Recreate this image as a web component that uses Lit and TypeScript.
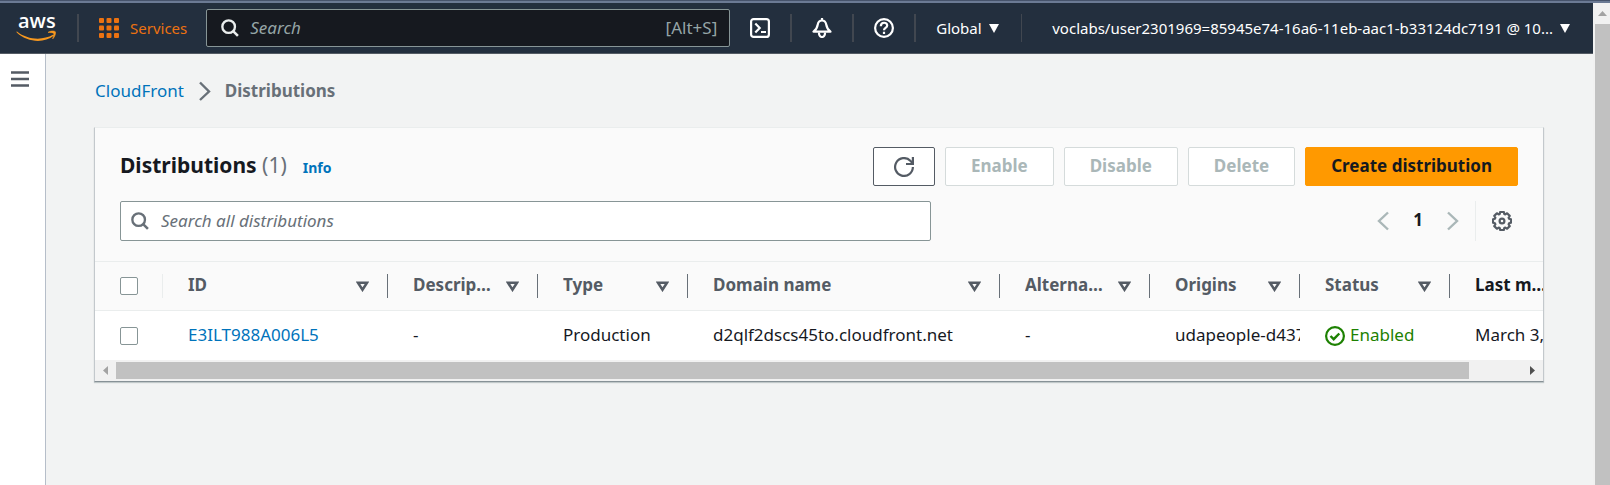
import { LitElement, html, css, svg } from "lit";
import { customElement, state } from "lit/decorators.js";
import { classMap } from "lit/directives/class-map.js";

interface Column {
  label: string;
  sortable: boolean;
  kind: string;
}

const columns: Column[] = [
  { label: "ID", sortable: true, kind: "id" },
  { label: "Description", sortable: true, kind: "std" },
  { label: "Type", sortable: true, kind: "std" },
  { label: "Domain name", sortable: true, kind: "domain" },
  { label: "Alternate domains", sortable: true, kind: "std" },
  { label: "Origins", sortable: true, kind: "std" },
  { label: "Status", sortable: true, kind: "std" },
  { label: "Last modified", sortable: false, kind: "std" },
];

const searchIcon = svg`<svg class="icon" viewBox="0 0 20 20" aria-hidden="true">
  <circle cx="8.5" cy="8.5" r="7" fill="none" stroke="currentColor" stroke-width="2.6"/>
  <path d="M13.200 13.200l5.600 5.600" fill="none" stroke="currentColor" stroke-width="2.800"/></svg>`;

const caret = svg`<svg class="caret" viewBox="0 0 10 10" aria-hidden="true"><path d="M0 1h10L5 10z" fill="currentColor"/></svg>`;

@customElement("app-root")
export class AppRoot extends LitElement {
  @state() private selected = false;

  static styles = css`
    :host {
      display: flex;
      flex-direction: column;
      height: 100vh;
      overflow: hidden;
      box-sizing: border-box;
      border-top: 1px solid #46536b;
      background: #f2f3f3;
      color: #16191f;
      font-family: "Noto Sans", "Open Sans", sans-serif;
      font-size: 17px;
      line-height: 24px;
    }
    * { box-sizing: border-box; }
    button, input { font: inherit; color: inherit; margin: 0; }
    button { background: none; border: 0; padding: 0; cursor: pointer; display: flex; align-items: center; justify-content: center; }
    a { color: #0073bb; text-decoration: none; }
    svg { display: block; flex: none; }
    .icon { width: 20px; height: 20px; }
    .caret { width: 10px; height: 10px; }

    .frame { flex: 1; min-height: 0; display: flex; border-top: 2px solid #6b7a94; }
    .window { flex: 1; min-width: 0; display: flex; flex-direction: column; }

    .topbar {
      flex: none; height: 51px; display: flex; align-items: center;
      background: #232f3e; border-bottom: 1px solid #545b64; color: #fff;
      font-size: 15px; padding-right: 23px;
    }
    .logo { width: 42px; height: 32px; margin: 0 19px 0 16px; overflow: visible; }
    .logo text { font-family: "Open Sans", "Noto Sans", sans-serif; font-size: 20px; font-weight: 600; fill: #fff; }
    .rule { flex: none; width: 2px; height: 28px; background: #414750; }
    .rule.thin { width: 1px; }
    .services { color: #ec7211; gap: 11px; margin: 0 19px 0 20px; }
    .globalsearch {
      flex: 1; height: 38px; display: flex; align-items: center; gap: 11px;
      background: #16191f; border: 1px solid #879596; border-radius: 2px;
      padding: 0 12px 0 14px; color: #95a5a6; margin-right: 20px; font-size: 17px;
      max-width: 524px;
    }
    .globalsearch .icon { color: #eaeded; width: 18px; height: 18px; }
    .field { flex: 1; min-width: 0; border: 0; outline: 0; background: none; padding: 0; }
    .field::placeholder { color: inherit; opacity: 1; font-style: italic; }
    .tool { width: 20px; height: 20px; margin-right: 20px; }
    .tool.next { margin-left: 20px; }
    .region { gap: 7px; margin: 0 22px 0 20px; }
    .account { gap: 7px; margin-left: auto; }

    .body { flex: 1; min-height: 0; display: flex; }
    .rail { flex: none; width: 46px; background: #fff; border-right: 1px solid #b6bec9; padding: 17px 0 0 11px; }
    .rail button { width: 18px; height: 16px; color: #545b64; }
    main { flex: 1; min-width: 0; padding: 25px 49px 0 48px; }

    .crumbs { display: flex; align-items: center; gap: 14px; margin-bottom: 24px; padding-left: 1px; }
    .crumbs .icon { color: #687078; width: 13px; }
    .crumbs .here { color: #687078; font-weight: 700; }

    .card { background: #fff; border: 1px solid #eaeded; border-left-color: #c3c8cc; border-right-color: #c3c8cc; border-bottom-color: #879196; box-shadow: 0 1px 1px rgba(0, 28, 36, 0.2); }
    .head { background: #fafafa; padding: 19px 25px 20px; border-bottom: 1px solid #eaeded; }
    .titlebar { display: flex; align-items: center; gap: 10px; margin-bottom: 15px; }
    .title { display: flex; align-items: baseline; margin-right: auto; padding-bottom: 3px; }
    h1 { margin: 0; font-size: 21px; line-height: 28px; font-weight: 700; }
    h1 .count { color: #687078; font-weight: 400; }
    .info { font-size: 14px; font-weight: 700; margin-left: 16px; }
    .btn { height: 39px; padding: 0 25px 2px; border: 1px solid #545b64; border-radius: 2px; background: #fff; font-weight: 700; color: #545b64; }
    .btn:disabled { border-color: #d5dbdb; color: #aab7b8; cursor: default; }
    .btn.icononly { padding: 0 20px; }
    .btn.primary { background: #ff9900; border-color: #ff9900; color: #16191f; }

    .filters { display: flex; align-items: center; }
    .filter { width: 58%; height: 40px; display: flex; align-items: center; gap: 12px; border: 1px solid #879596; border-radius: 2px; background: #fff; padding: 0 10px; color: #687078; }
    .filter .icon { width: 18px; height: 18px; }
    .pager { display: flex; align-items: center; gap: 24px; margin-left: auto; color: #aab7b8; }
    .pager .icon { width: 12px; }
    .pager .page { color: #16191f; font-weight: 700; padding-bottom: 2px; }
    .prefs { height: 40px; margin-left: 16px; padding: 0 6px 0 16px; border-left: 1px solid #eaeded; color: #545b64; }

    .viewport { overflow: hidden; }
    table { table-layout: fixed; border-collapse: separate; border-spacing: 0; width: 1505px; }
    .c-check { width: 68px; }
    .c-id { width: 225px; }
    .c-std { width: 150px; }
    .c-domain { width: 312px; }
    th, td { padding: 0; text-align: left; font-weight: 400; white-space: nowrap; overflow: hidden; }
    th { background: #fafafa; border-bottom: 1px solid #eaeded; height: 49px; color: #545b64; }
    td { height: 49px; }
    .cell { display: flex; align-items: center; height: 24px; padding-left: 25px; overflow: hidden; }
    th .cell { padding-right: 18px; border-right: 1px solid #687078; gap: 8px; }
    th.check .cell { border-right-color: #eaeded; }
    .label { flex: 1; min-width: 0; font-weight: 700; overflow: hidden; text-overflow: ellipsis; padding-bottom: 2px; }
    .value { padding-bottom: 2px; }
    th.fixed { color: #16191f; }
    th.fixed .cell { padding-right: 52px; }
    .sort { width: 13px; height: 11px; }
    .tick { appearance: none; width: 18px; height: 18px; border: 1px solid #879596; border-radius: 2px; background: #fff; }
    .tick:checked { background: #0073bb; border-color: #0073bb; }
    .status { color: #1d8102; gap: 5px; }

    .hscroll { display: flex; align-items: center; height: 21px; background: #f1f1f1; }
    .arrow { flex: none; width: 21px; height: 21px; color: #a3a3a3; display: flex; align-items: center; justify-content: center; }
    .arrow.on { color: #505050; }
    .track { flex: 1; height: 17px; }
    .thumb { width: calc(100% * 1448 / 1505); height: 17px; background: #c1c1c1; }

    .vscroll { flex: none; width: 17px; background: #f1f1f1; display: flex; flex-direction: column; padding-left: 2px; }
    .vscroll .arrow { width: 15px; }
    .vthumb { flex: 1; background: #c1c1c1; }
  `;

  private toggle() {
    this.selected = !this.selected;
  }

  private topbar() {
    return html`<header class="topbar">
      <a href="#" aria-label="AWS"><svg class="logo" viewBox="0 0 42 32" aria-hidden="true">
        <text x="2" y="16">aws</text>
        <path d="M1 19.500C11 27.800 26.500 28.800 37 22.800c.9-.5 1.500.3.700 1C28 31.500 11.500 30.500 1 20.800c-.8-.8-.5-1.600 0-1.300z" fill="#f7981f"/>
        <path d="M32 20.400c2.500-1.800 6.500-1.600 7.300-.7.700 1-.3 5.200-2.600 7.200.5-2 1.600-4.700 1.100-5.500-.6-.9-3.800-.9-5.800-1z" fill="#f7981f" stroke="#f7981f" stroke-width=".6"/>
      </svg></a>
      <span class="rule"></span>
      <button class="services">
        <svg class="icon" viewBox="0 0 20 20" fill="#ec7211" aria-hidden="true">
          ${[0, 7.5, 15].map((y) => [0, 7.5, 15].map((x) => svg`<rect x=${x} y=${y} width="5" height="5" rx="1"/>`))}
        </svg>Services</button>
      <label class="globalsearch">${searchIcon}<input class="field" type="search" placeholder="Search" aria-label="Search" /><span>[Alt+S]</span></label>
      <button class="tool" aria-label="CloudShell"><svg class="icon" viewBox="0 0 20 20" fill="none" stroke="#fff" stroke-width="2.200" aria-hidden="true">
        <rect x="1.100" y="1.100" width="17.800" height="17.800" rx="2.500"/><path d="M5.300 5.500L9.700 10l-4.400 4.500M11 14h5"/></svg></button>
      <span class="rule"></span>
      <button class="tool next" aria-label="Notifications"><svg class="icon" viewBox="0 0 20 20" fill="none" stroke="#fff" stroke-width="2.200" stroke-linejoin="round" aria-hidden="true">
        <path d="M10 0v2.500M1.500 13.700h17c-3-2.200-3.700-4-4.200-7C13.800 4 12.500 2.500 10 2.500S6.200 4 5.700 6.700c-.5 3-1.200 4.800-4.200 7z"/>
        <path d="M7 14.500c-.4 6 6.400 6 6 0"/></svg></button>
      <span class="rule"></span>
      <button class="tool next" aria-label="Help"><svg class="icon" viewBox="0 0 20 20" fill="none" stroke="#fff" stroke-width="2.200" aria-hidden="true">
        <circle cx="10" cy="10" r="8.900"/><path d="M6.800 8.200C6.800 3.600 13.200 3.800 13.200 7.500c0 2.400-3.200 2.500-3.200 4.700M10 13.700v2.300"/></svg></button>
      <span class="rule"></span>
      <button class="region">Global ${caret}</button>
      <span class="rule thin"></span>
      <button class="account">voclabs/user2301969=85945e74-16a6-11eb-aac1-b33124dc7191 @ 10... ${caret}</button>
    </header>`;
  }

  private headCell(col: Column) {
    return html`<th scope="col" class=${classMap({ fixed: !col.sortable })}>
      <div class="cell"><span class="label">${col.label}</span>${col.sortable
        ? svg`<svg class="sort" viewBox="0 0 13 11" aria-hidden="true"><path d="M2 1.800h9L6.500 8.800z" fill="none" stroke="currentColor" stroke-width="2.500"/></svg>`
        : ""}</div></th>`;
  }

  private tick(label: string) {
    return html`<input class="tick" type="checkbox" aria-label=${label} .checked=${this.selected} @change=${this.toggle} />`;
  }

  private table() {
    return html`<div class="viewport"><table>
      <colgroup><col class="c-check" />${columns.map((c) => html`<col class=${"c-" + c.kind} />`)}</colgroup>
      <thead><tr><th class="check"><div class="cell">${this.tick("Select all")}</div></th>${columns.map((c) => this.headCell(c))}</tr></thead>
      <tbody><tr>
        <td class="check"><div class="cell">${this.tick("Select E3ILT988A006L5")}</div></td>
        <td><div class="cell"><a class="value" href="#">E3ILT988A006L5</a></div></td>
        <td><div class="cell"><span class="value">-</span></div></td>
        <td><div class="cell"><span class="value">Production</span></div></td>
        <td><div class="cell"><span class="value">d2qlf2dscs45to.cloudfront.net</span></div></td>
        <td><div class="cell"><span class="value">-</span></div></td>
        <td><div class="cell"><span class="value">udapeople-d437</span></div></td>
        <td><div class="cell status"><svg class="icon" viewBox="0 0 20 20" fill="none" stroke="currentColor" stroke-width="2.200" aria-hidden="true"><circle cx="10" cy="10" r="8.900"/><path d="M5.500 10l3.200 3.200 5.600-5.700" stroke-width="2.400"/></svg><span class="value">Enabled</span></div></td>
        <td><div class="cell"><span class="value">March 3, 2023</span></div></td>
      </tr></tbody>
    </table></div>`;
  }

  render() {
    return html`<div class="frame">
      <div class="window">
        ${this.topbar()}
        <div class="body">
          <nav class="rail"><button aria-label="Open navigation"><svg width="18" height="16" viewBox="0 0 18 16" aria-hidden="true"><path d="M0 1.500h18M0 8h18M0 14.500h18" stroke="currentColor" stroke-width="2.400"/></svg></button></nav>
          <main>
            <nav class="crumbs" aria-label="Breadcrumbs">
              <a href="#">CloudFront</a>
              <svg class="icon" viewBox="0 0 13 20" aria-hidden="true"><path d="M2 1.500L11 10.500l-9 8.500" fill="none" stroke="currentColor" stroke-width="2.400"/></svg>
              <span class="here">Distributions</span>
            </nav>
            <section class="card">
              <div class="head">
                <div class="titlebar">
                  <div class="title"><h1>Distributions <span class="count">(1)</span></h1><a class="info" href="#">Info</a></div>
                  <button class="btn icononly" aria-label="Refresh"><svg class="icon" viewBox="0 0 20 20" fill="none" stroke="currentColor" stroke-width="2.200" aria-hidden="true"><path d="M18.900 10a8.900 8.900 0 1 1-2.600-6.300L18.500 6"/><path d="M18.900 0v7h-6.900"/></svg></button>
                  <button class="btn" disabled>Enable</button>
                  <button class="btn" disabled>Disable</button>
                  <button class="btn" disabled>Delete</button>
                  <button class="btn primary">Create distribution</button>
                </div>
                <div class="filters">
                  <label class="filter">${searchIcon}<input class="field" type="search" placeholder="Search all distributions" aria-label="Search all distributions" /></label>
                  <div class="pager">
                    <button aria-label="Previous page"><svg class="icon" viewBox="0 0 12 20" aria-hidden="true"><path d="M11 1.500L2 10l9 8.500" fill="none" stroke="currentColor" stroke-width="2.400"/></svg></button>
                    <button class="page">1</button>
                    <button aria-label="Next page"><svg class="icon" viewBox="0 0 12 20" aria-hidden="true"><path d="M1 1.500L10 10l-9 8.500" fill="none" stroke="currentColor" stroke-width="2.400"/></svg></button>
                  </div>
                  <button class="prefs" aria-label="Preferences"><svg class="icon" viewBox="0 0 20 20" fill="none" stroke="currentColor" stroke-width="2.200" stroke-linejoin="round" aria-hidden="true">
                    <path d="M8.200 1h3.600l.5 2 1 .4 1.800-1.100 2.600 2.600-1.100 1.800.4 1 2 .5v3.600l-2 .5-.4 1 1.100 1.800-2.600 2.600-1.800-1.100-1 .4-.5 2H8.200l-.5-2-1-.4-1.800 1.100-2.600-2.600 1.100-1.800-.4-1-2-.5V8.200l2-.5.4-1-1.100-1.800 2.600-2.600 1.800 1.100 1-.4z"/><circle cx="10" cy="10" r="2.400"/></svg></button>
                </div>
              </div>
              ${this.table()}
              <div class="hscroll" aria-hidden="true">
                <span class="arrow"><svg width="5" height="9" viewBox="0 0 5 9"><path d="M5 0v9L0 4.500z" fill="currentColor"/></svg></span>
                <div class="track"><div class="thumb"></div></div>
                <span class="arrow on"><svg width="5" height="9" viewBox="0 0 5 9"><path d="M0 0v9l5-4.500z" fill="currentColor"/></svg></span>
              </div>
            </section>
          </main>
        </div>
      </div>
      <div class="vscroll" aria-hidden="true">
        <span class="arrow"><svg width="9" height="5" viewBox="0 0 9 5"><path d="M0 5h9L4.500 0z" fill="currentColor"/></svg></span>
        <div class="vthumb"></div>
      </div>
    </div>`;
  }
}
